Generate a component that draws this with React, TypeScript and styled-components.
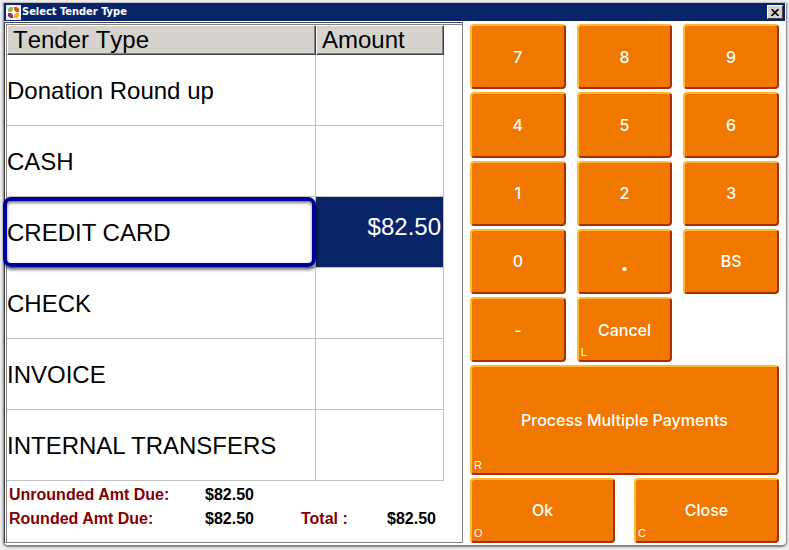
import React from "react";
import styled, { createGlobalStyle } from "styled-components";

const GlobalStyle = createGlobalStyle`
  * { box-sizing: border-box; }
  body { margin: 0; background: #ededed; font-family: "Liberation Sans", Arial, sans-serif; color: #000; }
  button { font: inherit; }
`;

const Page = styled.div`
  display: flex;
  height: 100vh;
  min-height: 540px;
  padding: 3px 3px 5px 4px;
`;

const Window = styled.main`
  flex: 1;
  display: flex;
  flex-direction: column;
  background: #fff;
  border-right: 1px solid #f4f4f4;
  border-radius: 0 0 4px 4px;
  box-shadow: 0 -1px 0 #c4c4c4, -1px 0 0 #9a9a9a, 0 1px 2px 1px #7b7b7b;
`;

const TitleBar = styled.header`
  display: flex;
  align-items: center;
  flex: none;
  height: 18px;
  padding: 0 2px;
  gap: 1px;
  background: #0a246a;
  color: #fff;
`;

const Title = styled.h1`
  flex: 1;
  margin: 0;
  font: bold 11px/18px "DejaVu Sans Condensed", "Noto Sans", sans-serif;
`;

const CloseBox = styled.button`
  display: grid;
  place-items: center;
  width: 16px;
  height: 14px;
  padding: 0;
  background: #d6d3ce;
  border: 1px solid;
  border-color: #fff #404040 #404040 #fff;
`;

const Body = styled.div`
  flex: 1;
  min-height: 0;
  display: grid;
  grid-template-rows: minmax(0, 1fr);
  grid-template-columns: minmax(0, 459fr) minmax(0, 309fr);
  column-gap: 7px;
  padding: 1px 6px 2px 0;
`;

const ListPanel = styled.section`
  display: flex;
  flex-direction: column;
  border: 1px solid #848284;
  border-top-color: #424142;
  border-left-color: #424142;
  box-shadow: inset 1px 1px 0 #fff, inset 2px 2px 0 #848284;
  padding: 2px 18px 0 2px;
`;

const TenderTable = styled.table`
  width: 100%;
  border-collapse: separate;
  border-spacing: 0;
  table-layout: fixed;
  font-size: 24px;
  line-height: 28px;
`;

const AmountCol = styled.col`
  width: 128px;
`;

const HeadCell = styled.th`
  height: 30px;
  padding: 0 5px;
  text-align: left;
  font-weight: normal;
  font-kerning: none;
  line-height: 26px;
  background: #d6d3ce;
  border: 1px solid;
  border-color: #fff #424142 #424142 #fff;
  box-shadow: inset -1px -1px 0 #848284;
`;

const Cell = styled.td<{ $selected?: boolean }>`
  position: relative;
  height: 71px;
  padding: 2px 0 0;
  white-space: nowrap;
  border-right: 1px solid #c0c0c0;
  border-bottom: 1px solid #c0c0c0;
  background: ${(p) => (p.$selected ? "#0a246a" : "#fff")};
  color: ${(p) => (p.$selected ? "#fff" : "#000")};
`;

const AmountCell = styled(Cell)`
  padding: 0 2px 10px 0;
  text-align: right;
`;

const Highlight = styled.span`
  position: absolute;
  z-index: 1;
  inset: 0 -1px 0 -4px;
  border: 4px solid #0000a0;
  border-radius: 8px;
  box-shadow: 1px 3px 3px rgba(0, 0, 0, 0.5), inset 0 2px 3px rgba(0, 0, 0, 0.5);
  pointer-events: none;
`;

const Totals = styled.dl`
  display: grid;
  grid-template-columns: 196px 96px 1fr auto;
  margin: 0;
  padding: 2px 0 0 2px;
  margin-right: 8px;
  font-size: 16px;
  font-weight: bold;
  line-height: 24px;
`;

const TotalLabel = styled.dt<{ $col: number }>`
  grid-column: ${(p) => p.$col};
  color: #840000;
`;

const TotalValue = styled.dd<{ $col: number }>`
  grid-column: ${(p) => p.$col};
  margin: 0;
`;

const Keypad = styled.section`
  display: grid;
  grid-template-columns: repeat(3, minmax(0, 1fr));
  grid-template-rows: repeat(5, minmax(0, 65fr)) minmax(0, 109fr) minmax(0, 65fr);
  gap: 3px 11px;
  padding-top: 2px;
`;

const Key = styled.button<{ $wide?: boolean; $point?: boolean }>`
  position: relative;
  grid-column: ${(p) => (p.$wide ? "1 / -1" : "auto")};
  padding: 0;
  background: #f07800;
  border: 2px solid;
  border-color: #ffb830 #a83000 #a83000 #ffb830;
  border-radius: 4px;
  color: #fff;
  font-family: Inter, "Liberation Sans", sans-serif;
  font-size: ${(p) => (p.$point ? 28 : 16)}px;
  font-weight: 500;
  line-height: 20px;
`;

const Hint = styled.small`
  position: absolute;
  left: 2px;
  bottom: 1px;
  font-family: "Liberation Sans", Arial, sans-serif;
  font-size: 11px;
  font-weight: normal;
  line-height: 13px;
`;

const BottomRow = styled.div`
  grid-column: 1 / -1;
  display: grid;
  grid-template-columns: 1fr 1fr;
  column-gap: 19px;
`;

const tenders = [
  { name: "Donation Round up" },
  { name: "CASH" },
  { name: "CREDIT CARD", amount: "$82.50" },
  { name: "CHECK" },
  { name: "INVOICE" },
  { name: "INTERNAL TRANSFERS" },
];

const keys = ["7", "8", "9", "4", "5", "6", "1", "2", "3", "0", ".", "BS", "-"];

const Logo = () => (
  <svg width="15" height="15" viewBox="0 0 15 15" aria-hidden="true">
    <rect width="15" height="15" fill="#fff" />
    <path d="M1 5V1H5M10 1h4V5M14 10v4H10M5 14H1V10" fill="none" stroke="#d4d4d4" />
    <path d="M2 7V4L4 2H7V5L5 7Z" fill="#84c341" />
    <path d="M8 2H11L13 4V7H10L8 5Z" fill="#f04e10" />
    <path d="M2 8H5L7 10V13H4L2 11Z" fill="#942a7b" />
    <path d="M10 8H13V11L11 13H8V10Z" fill="#ffae00" />
  </svg>
);

export default function App() {
  return (
    <>
      <GlobalStyle />
      <Page>
        <Window>
          <TitleBar>
            <Logo />
            <Title>Select Tender Type</Title>
            <CloseBox aria-label="Close window">
              <svg width="8" height="7" viewBox="0 0 8 7" aria-hidden="true">
                <path d="M0.5 0L7.5 7M7.5 0L0.5 7" stroke="#000" strokeWidth="1.6" />
              </svg>
            </CloseBox>
          </TitleBar>
          <Body>
            <ListPanel>
              <TenderTable>
                <colgroup>
                  <col />
                  <AmountCol />
                </colgroup>
                <thead>
                  <tr>
                    <HeadCell scope="col">Tender Type</HeadCell>
                    <HeadCell scope="col">Amount</HeadCell>
                  </tr>
                </thead>
                <tbody>
                  {tenders.map((t) => (
                    <tr key={t.name}>
                      <Cell>
                        {t.name}
                        {t.amount && <Highlight />}
                      </Cell>
                      <AmountCell $selected={!!t.amount}>{t.amount}</AmountCell>
                    </tr>
                  ))}
                </tbody>
              </TenderTable>
              <Totals>
                <TotalLabel $col={1}>Unrounded Amt Due:</TotalLabel>
                <TotalValue $col={2}>$82.50</TotalValue>
                <TotalLabel $col={1}>Rounded Amt Due:</TotalLabel>
                <TotalValue $col={2}>$82.50</TotalValue>
                <TotalLabel $col={3}>Total :</TotalLabel>
                <TotalValue $col={4}>$82.50</TotalValue>
              </Totals>
            </ListPanel>
            <Keypad>
              {keys.map((k) => (
                <Key key={k} $point={k === "."}>
                  {k}
                </Key>
              ))}
              <Key>
                Cancel<Hint>L</Hint>
              </Key>
              <Key $wide>
                Process Multiple Payments<Hint>R</Hint>
              </Key>
              <BottomRow>
                <Key>
                  Ok<Hint>O</Hint>
                </Key>
                <Key>
                  Close<Hint>C</Hint>
                </Key>
              </BottomRow>
            </Keypad>
          </Body>
        </Window>
      </Page>
    </>
  );
}
